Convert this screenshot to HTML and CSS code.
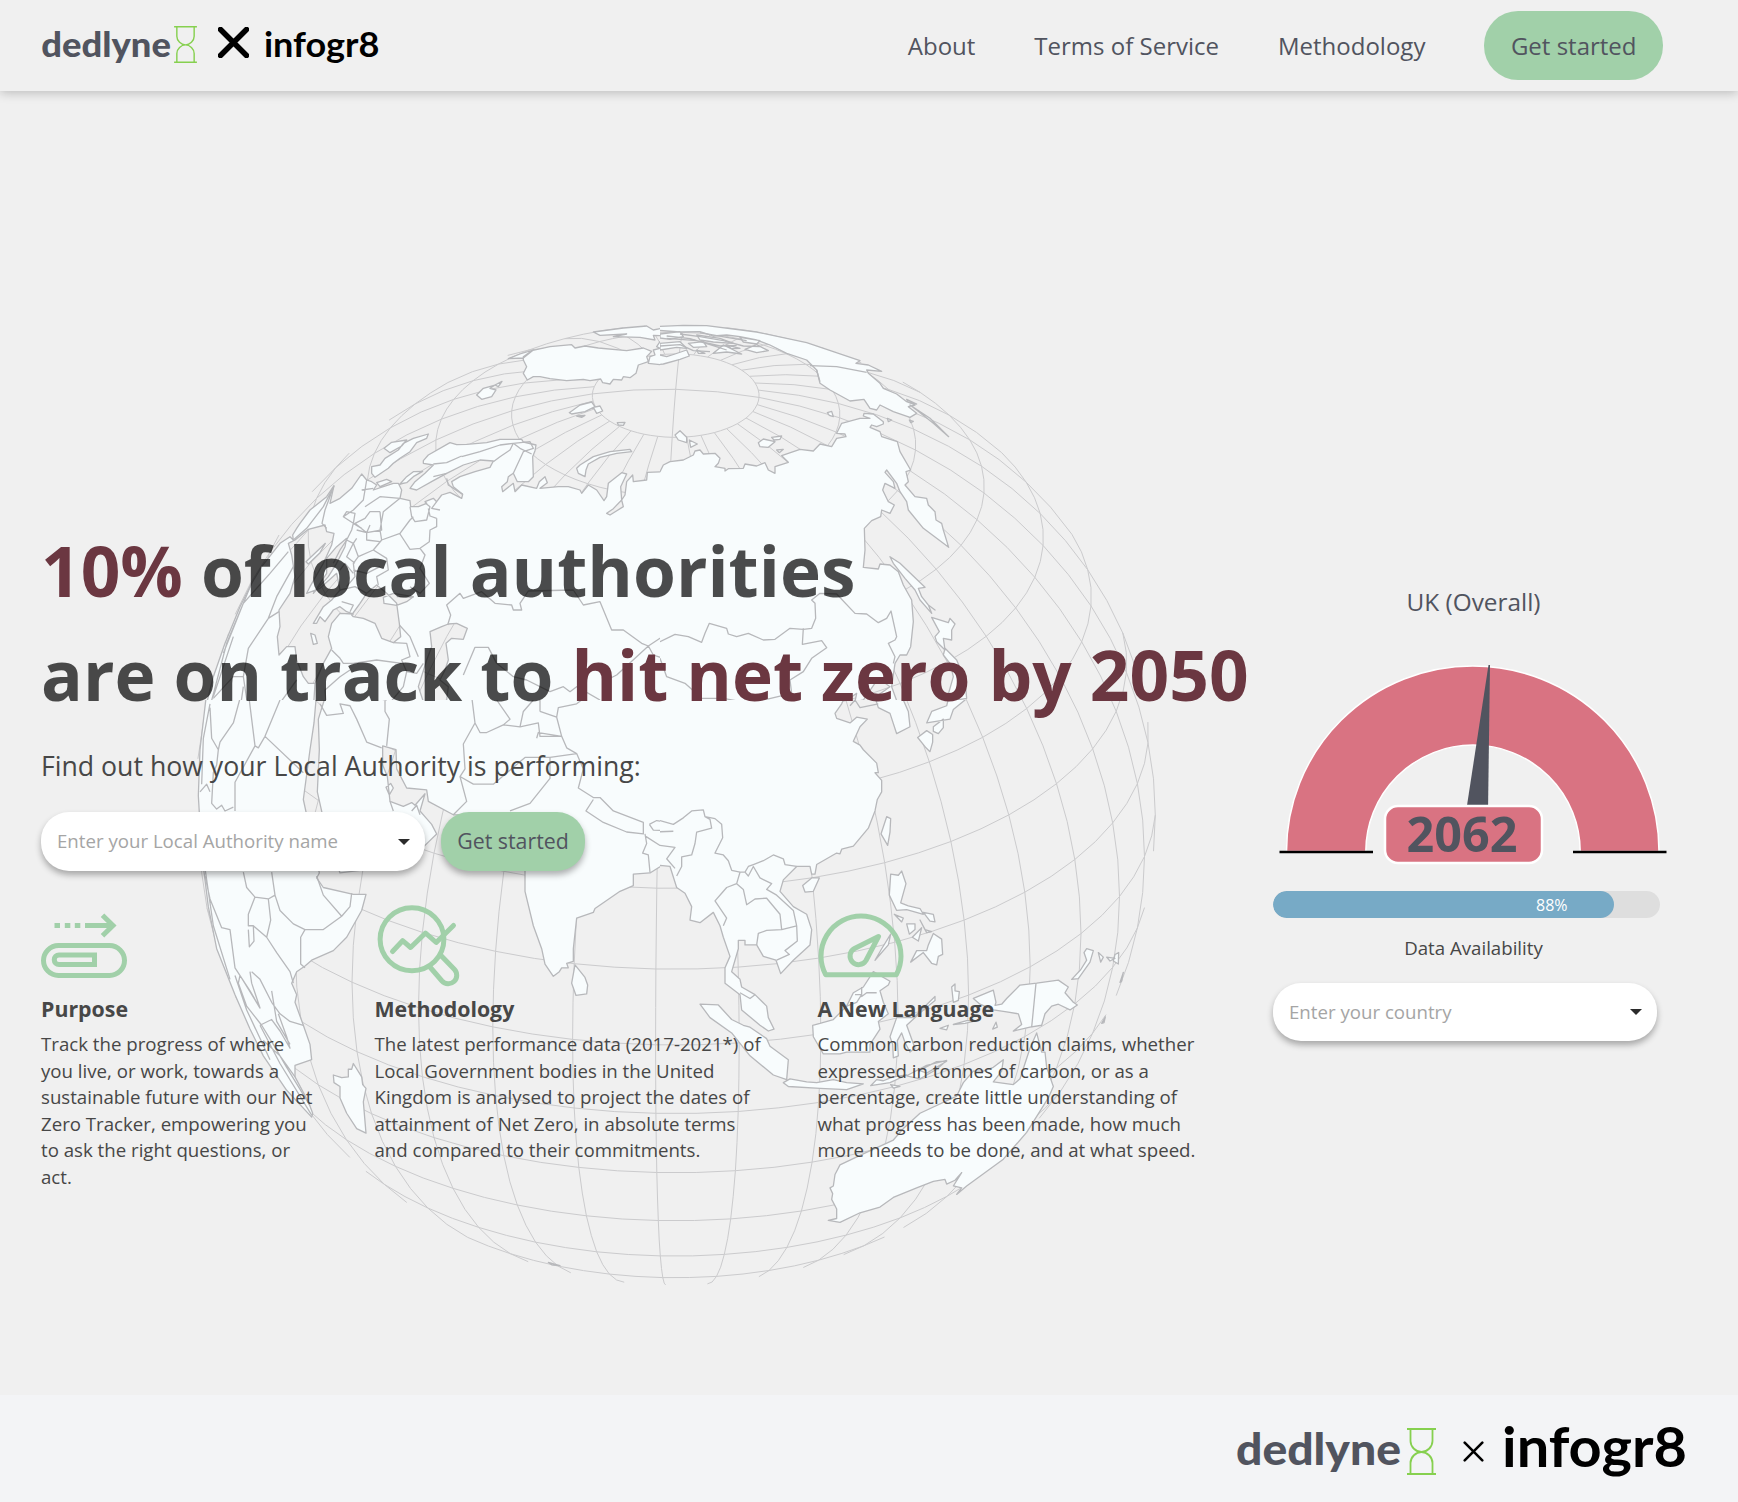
FILE: index.html
```html
<!DOCTYPE html>
<html lang="en">
<head>
<meta charset="utf-8">
<title>Net Zero Tracker</title>
<link rel="stylesheet" href="styles.css">
</head>
<body>
<header class="header">
  <div class="brand">
    <svg class="brand-dedlyne" viewBox="0 0 166 56" width="131" height="44"><text class="word-dedlyne" x="0" y="42" textLength="165" lengthAdjust="spacingAndGlyphs">dedlyne</text></svg>
    <svg class="brand-glass" viewBox="0 0 29 47" width="23" height="37"><path d="M0 1H29M0 46H29M3.500 1V13C3.500 19 9 24 14.500 24S25.500 19 25.500 13V1M3.500 46V35C3.500 29 9 24 14.500 24S25.500 29 25.500 35V46"/></svg>
    <svg class="brand-x" viewBox="0 0 31 31" width="31" height="31"><path d="M2.500 2.500L28.500 28.500M28.500 2.500L2.500 28.500"/></svg>
    <svg class="brand-info" viewBox="0 0 182 64" width="114" height="40"><text class="word-info" x="-2" y="49" textLength="185" lengthAdjust="spacingAndGlyphs">infogr8</text></svg>
  </div>
  <nav class="nav">
    <a>About</a><a>Terms of Service</a><a>Methodology</a><a class="nav-cta">Get started</a>
  </nav>
</header>

<main class="main">
  <svg class="globe" viewBox="180 91 1000 1304" width="1000" height="1304">
    <path id="graticule" class="graticule"/>
    <!-- north-west quadrant: Europe, Greenland, North Africa -->
    <svg class="land" x="180" y="310" width="480" height="390" viewBox="0 0 1440 1170" preserveAspectRatio="none">
      <path d="M340,690L338,675 350,655 360,640 390,600 440,560 462,527 450,580 480,565 515,535 545,492 560,510 575,515 590,525 580,540 640,520 655,520 665,540 660,565 690,572 692,590 715,590 740,580 735,575 760,565 770,575 785,555 810,547 845,565 848,553 820,530 815,515 840,500 885,485 930,472 940,453 900,450 850,465 800,490 760,512 710,540 690,535 705,515 735,490 760,465 730,460 730,452 745,435 810,398 830,404 860,403 920,398 960,388 1025,388 1030,396 1068,405 1065,422 1058,440 1060,500 1045,515 1012,515 1000,490 985,500 982,515 965,530 968,545 1000,520 1005,545 1025,525 1070,535 1078,515 1095,500 1102,518 1080,535 1135,530 1165,530 1200,540 1205,550 1225,525 1250,540 1272,572 1280,560 1285,520 1325,488 1340,492 1322,530 1325,570 1300,596 1280,610 1290,615 1330,590 1325,570 1335,555 1340,515 1358,495 1360,515 1400,510 1402,487 1448,485 1455,470 1500,450 1500,1200 75,1200 100,1100 135,1000 180,890 215,820 245,770 300,700 330,680Z
      M325,700L345,690 385,658 435,645 440,665 462,670 455,705 430,760 390,830 380,850 420,835 470,790 480,840 455,870 430,890 400,940 410,940 420,920 435,935 460,900 480,890 500,905 520,912 480,910 455,940 445,980 455,1015 430,1060 405,1120 385,1120 370,1100 350,1050 345,1010 320,1010 297,1035 292,980 300,950 297,900 330,850 345,800 335,735Z
      M515,915L540,880 560,850 590,825 620,850 650,880 658,940 662,980 640,998 605,985 585,940 550,925 520,920Z
      M610,862L640,850 700,860 680,875 650,886 612,880Z
      M750,965L785,950 805,942 830,940 862,955 850,988 815,985 798,1000 805,1050 795,1080 780,1110 805,1130 800,1170 770,1185 730,1175 715,1130 740,1050 755,1010Z
      M1030,140L1055,122 1110,110 1175,104 1185,114 1215,108 1255,114 1340,122 1390,114 1415,124 1400,140 1405,155 1375,165 1368,190 1350,203 1330,200 1325,210 1300,208 1290,222 1268,218 1262,207 1230,212 1210,208 1160,212 1110,206 1080,200 1060,200 1042,210 1030,190 1040,170 1030,150Z
      M985,146L1020,132 1060,120 1030,144Z
      M1240,66L1330,54 1400,48 1420,60 1500,44 1500,80 1420,76 1425,90 1380,82 1300,80 1340,72 1260,76Z
      M1440,95L1430,110 1440,115 1420,120 1425,135 1410,140 1405,160 1450,165 1500,155 1500,95Z
      M890,255L910,235 945,225 930,235 948,240 935,260 905,268Z M945,225L966,214 955,230Z
      M1168,308L1200,285 1235,276 1245,290 1215,305 1175,312Z M1240,292L1260,288 1268,303 1250,310Z M1312,338L1335,337 1330,346 1315,345Z M1190,318L1215,316 1205,322Z
      M1190,475L1200,465 1240,440 1290,425 1350,418 1355,425 1310,430 1260,442 1225,462 1218,480 1215,500 1195,490Z
      M575,470L600,465 615,445 655,420 670,400 700,385 745,372 740,385 710,398 690,425 660,445 640,460 625,475 585,502 575,490Z
      M612,415L635,397 680,390 665,408 630,428Z M660,522L680,500 700,485 728,484 700,500 680,518Z M590,518L620,508 635,515 600,530Z
      M392,970L405,975 412,1000 400,1003Z M378,755L436,700 420,728 385,762Z M440,745L470,710 500,685 495,710 470,760 445,800 400,850 440,790Z"/>
      <path class="border" d="M462,527L435,600 426,640 440,655 M340,690L380,655 430,590 458,535 M560,510L550,570 520,600 490,620 520,640 515,660 500,690 480,720 460,760 M490,620L500,605 525,610 520,640 545,655 M600,605L570,605 555,625 525,640 560,668 570,645 M600,605L605,660 560,668 530,660 M660,565L610,605 600,660 605,690 660,670 690,630 700,620 M690,590L695,620 705,635 740,630 750,590 735,578 M770,625L750,618 745,595 M770,575L755,595 780,600 M770,625L770,650 750,660 748,695 720,715 690,718 660,672 M720,715L735,735 720,775 748,820 720,850 690,830 M605,690L580,720 535,740 520,700 530,685 M560,668L560,690 600,695 M535,740L520,760 525,800 500,830 M580,720L620,745 625,780 590,800 595,825 M650,860L700,862 M520,780L560,790 600,770 M500,690L520,700 500,740 525,760 M480,780L495,760 520,790 M480,840L525,830 560,850 M485,875L520,885 510,905 M545,540L580,535 M555,590L600,560 660,565 M848,553L805,525 800,505 M800,490L760,500 M845,440L900,425 960,405 1000,400 990,420 960,440 940,455 M1000,400L1020,415 1055,432 M1000,400L1050,395 1060,415 1030,425 1000,490 M760,462L800,458 845,438
      M803,945L812,915 800,885 840,850 850,865 905,845 945,880 995,885 1000,900 1025,900 1020,880 1045,843 1180,840 1210,885 1260,875 1295,960 1330,960 1385,1000 1405,1008 1440,985 1500,975 M1405,1008L1370,1040 1310,1095 1280,1110 M1405,1008L1420,1035 1450,1045 1460,1100 1500,1110 M850,1095L885,1012 925,1012 950,1060 1000,1100 1040,1110 1110,1145 1150,1130 1170,1145 1190,1130 1260,1170 M658,945L690,980 715,1040 M640,998L680,1000 690,1040 665,1050 680,1085 710,1090 730,1060 M455,1020L480,1045 490,1060 520,1060 590,1050 665,1060 M680,1085L670,1130 612,1200 M480,1200L480,1180 520,1190 M405,1120L400,1200 M440,1200L435,1140 480,1100 510,1080
      M297,905L265,925 205,1015 190,1100 205,1200 M190,1100L160,1100 100,1165 M265,925L290,860 340,770 M180,1200L190,1130 M350,1110L285,1200 M160,980L100,1160 M325,725L270,790 190,880 130,1030 M215,820L140,1000 90,1190"/>
    </svg>
    <!-- north-east quadrant: Siberia, Alaska, Japan -->
    <svg class="land" x="660" y="310" width="520" height="390" viewBox="0 0 1560 1170" preserveAspectRatio="none">
      <path d="M-20,490L0,485 10,465 30,455 70,450 100,435 105,423 120,420 130,432 165,430 180,445 175,460 165,470 195,475 195,483 205,476 250,475 255,462 290,468 315,458 325,480 345,490 345,470 385,457 365,437 420,418 460,423 480,402 515,410 530,385 558,380 555,372 530,370 545,340 600,325 630,325 610,318 612,310 640,312 670,335 670,342 650,350 635,345 630,352 660,365 665,380 712,395 720,425 752,480 738,485 745,515 735,525 765,560 800,565 805,585 825,605 828,630 845,640 850,660 866,712 790,655 745,600 740,575 720,545 710,520 680,480 675,487 700,515 705,535 675,520 668,540 685,575 703,585 690,610 665,600 662,620 635,632 613,655 615,720 610,772 655,777 660,762 690,765 715,785 730,825 755,870 760,935 752,1010 740,1035 720,1035 705,1060 695,1130 720,1200 -20,1200Z
      M550,1200L555,1175 590,1150 585,1175 610,1170 655,1105 690,1130 655,1155 660,1200Z
      M690,740L720,760 795,832 775,835 785,860 805,885 825,900 805,885 815,910 780,870 765,840 735,805 700,760Z
      M815,922L865,938 870,925 885,942 875,960 875,990 850,985 855,1020 830,995 825,980 838,965Z
      M855,1015L890,1050 915,1110 920,1165 890,1170 855,1200 820,1200 860,1170 880,1100 870,1060 850,1035Z
      M-20,50L70,46 140,47 290,66 440,98 600,152 588,160 625,165 665,184 620,180 625,190 660,220 670,235 710,252 740,275 765,285 745,290 770,310 750,322 700,305 660,285 650,300 630,295 612,268 570,273 510,240 480,220 470,180 440,150 380,130 330,105 290,90 240,80 200,75 160,78 120,65 60,66 -20,60Z
      M750,285L810,325 866,380 820,340 770,300Z M740,268L770,282 745,276Z
      M0,72L60,65 70,80 30,88 0,84Z M0,100L60,95 80,115 50,112 0,120Z M45,132L80,120 88,138 60,148 10,162 -20,166 -20,130 20,140Z
      M110,75L180,85 220,100 160,96 120,90Z M240,82L300,92 290,102 250,96Z M255,118L290,104 325,122 290,128Z M85,100L130,95 140,110 100,112Z M160,130L190,105 245,132 200,126Z M110,120L135,130 115,130Z M200,105L240,115 215,116Z
      M45,375L60,362 80,382 80,398 55,390Z M88,390L112,402 92,412Z M295,398L310,387 345,395 325,412 300,410Z M335,382L365,378 360,388 342,390Z M350,420L370,418 358,428Z M502,308L515,304 520,320 508,316Z M682,325L695,330 685,335Z M748,330L760,334 752,338Z"/>
      <path class="border" d="M-20,1000L0,995 45,973 85,980 125,997 135,970 148,940 200,955 205,972 230,980 265,970 310,990 345,988 390,955 430,958 455,955 467,925 465,880 455,870 480,850 530,852 585,910 620,912 655,938 680,925 693,903 710,980 705,990 685,1000 705,1040 700,1060 M430,955L427,1003 485,992 500,1013 455,1045 430,1085 390,1110 395,1150 270,1180 190,1165 125,1165 75,1120 20,1100 0,1045 M450,167L530,170 620,187 M470,180L480,215 M20,85L110,92 180,108 230,106 M60,72L120,80 190,92 250,108 300,110 M0,108L60,104 100,122 150,125 M120,68L200,82 260,92 M20,78L90,86 150,104 200,120"/>
    </svg>
    <!-- south-west quadrant: Africa, Arabia, India -->
    <svg class="land" x="180" y="700" width="480" height="600" viewBox="0 0 1440 1568" preserveAspectRatio="none">
      <path d="M80,-20L60,130 55,250 65,400 85,540 110,650 165,770 210,860 250,930 320,1020 395,1090 398,1080 385,1050 345,985 345,955 395,940 390,900 370,850 345,790 350,770 335,740 350,710 375,695 395,680 460,655 500,620 545,550 558,508 520,508 430,490 410,465 418,452 380,300 370,260 390,130 402,60 410,-20Z
      M440,-20L415,50 418,130 412,240 430,310 460,400 480,452 540,445 640,430 735,380 770,350 755,325 740,310 720,290 735,245 705,275 695,268 670,278 630,265 622,200 608,170 608,120 648,130 650,180 680,230 740,235 745,265 820,300 860,300 900,330 960,400 1000,400 1035,440 1035,500 1060,590 1085,650 1095,690 1120,722 1138,710 1145,700 1165,700 1160,688 1180,683 1180,650 1190,570 1240,555 1245,545 1320,500 1360,485 1360,455 1410,452 1450,430 1470,440 1500,490 1500,-20Z
      M618,228L632,218 640,230 628,248Z
      M460,980L485,987 505,985 505,965 515,965 520,950 545,985 548,1005 558,1015 550,1050 558,1132 530,1120 500,1080 480,1040 480,1010 462,1000Z
      M1185,692L1215,725 1223,745 1220,768 1188,772 1175,740Z M1105,1470L1140,1478 1115,1476Z"/>
      <path class="border" d="M75,460L90,520 125,595 150,600 165,700 210,760 240,805 M190,450L200,490 225,515 265,520 285,510 275,450 M225,515L205,560 205,590 220,590 260,620 290,660 330,710 340,740 M220,590L222,630 208,645 205,600 M265,520L272,575 260,620 M285,510L300,550 340,585 375,600 430,600 485,565 430,510 410,460 M375,600L362,620 362,690 375,700 M485,565L510,540 515,505 M215,710L240,730 275,790 300,820 330,840 370,850 M210,710L215,740 240,805 180,720 175,740 200,800 245,850 M240,850L275,835 300,865 330,910 320,880 295,820 M245,850L280,900 320,960 390,1060 M165,720L200,810 270,940 M275,760L290,840 330,900 M240,850L300,950 395,1085 M250,890L300,930 345,985 M65,300L75,440 100,590 150,730
      M90,20L95,100 115,130 120,110 160,60 185,-20 M205,-20L225,120 235,125 255,95 300,0 M255,95L370,190 M225,120L165,215 165,290 M115,130L110,170 100,190 95,270 110,285 125,275 135,290 160,280 M60,240L80,220 90,240 M90,10L70,100 65,220
      M420,10L440,40 490,35 480,10 510,15 530,50 560,110 605,125 M615,-20L615,30 628,50 620,120 M540,-10L620,0 M875,-10L885,60 850,115 855,180 840,200 860,265 820,300 M885,60L900,85 920,85 970,65 1020,70 1075,60 1080,95 1145,95 1160,125 1190,140 1210,180 1195,230 1240,255 1260,255 1300,290 1390,320 1390,350 1340,345 1270,320 1218,290 1240,260 M840,200L880,220 940,220 1035,150 1110,150 1190,140 M1110,150L1110,205 1050,270 990,290 M950,0L990,50 970,65 M1020,70L1030,30 1060,0 M1070,100L1075,85 1145,95 M1080,30L1130,45 1145,95 M1080,-5L1080,30 M1130,45L1135,20 1190,10 1220,-10 M1408,325L1430,315 1475,322 1478,342 1420,340 1408,325 M1395,350L1400,375 1388,400 1405,405 1410,450 M1395,355L1440,380 1480,380 1460,420 1480,440 M630,265L640,290 M695,290L710,275 720,300"/>
    </svg>
    <!-- south-east quadrant: China, South-East Asia, Australia -->
    <svg class="land" x="660" y="700" width="520" height="600" viewBox="0 0 1560 1568" preserveAspectRatio="none">
      <path d="M-20,-20L560,-20 545,10 525,35 530,48 570,60 590,45 622,50 600,70 580,108 600,118 610,130 650,165 655,190 645,190 665,210 665,240 652,260 645,290 625,335 580,382 545,390 540,402 530,400 470,430 465,455 455,455 450,435 410,435 370,470 360,500 400,540 440,560 455,600 450,640 400,680 362,715 348,680 310,670 290,640 255,640 255,628 235,628 235,650 215,710 240,730 245,750 285,770 320,800 325,830 342,860 325,865 300,850 245,810 240,770 195,740 195,700 210,670 190,620 180,590 160,555 120,582 90,575 95,540 75,505 50,490 30,435 0,432 -20,450Z
      M640,-20L655,20 690,35 710,88 750,70 745,30 720,-20Z
      M930,-20L915,0 880,25 870,50 800,60 815,30 860,15 870,-20Z M773,98L800,80 818,90 818,110 810,135 798,125Z M820,70L850,50 850,72 835,88 820,82Z
      M663,350L680,305 692,310 690,345 683,380Z M428,485L455,465 478,465 460,500 435,502Z
      M692,455L715,458 725,447 738,480 722,530 745,538 780,545 790,560 740,548 710,550 688,510Z M703,560L730,570 725,580Z M740,585L765,585 765,600 748,612Z M757,620L785,595 775,630Z M790,555L820,560 825,580 810,578Z M780,575L795,600 815,605 800,608Z
      M752,685L770,655 800,655 805,640 820,610 845,625 848,665 835,670 830,692 815,688 790,660Z M645,680L665,650 692,612 685,640 660,665Z
      M458,850L480,845 520,835 560,800 580,765 610,750 640,710 690,735 685,745 660,760 670,790 685,820 655,840 660,860 630,900 630,920 600,920 560,920 540,925 490,925 460,880Z
      M120,795L175,797 215,835 250,850 270,855 320,885 330,905 385,940 380,992 340,980 270,930 215,870 150,830Z
      M370,1000L390,990 440,998 470,1000 520,992 560,1000 610,1003 560,1018 480,1015 385,1010Z
      M700,935L698,900 690,880 710,830 760,830 825,775 825,785 790,810 740,850 765,910 750,920 735,895 725,870 712,890 715,930Z
      M632,1008L650,992 670,995 700,985 740,980 690,1000Z M692,1005L720,1010 700,1014Z M740,982L800,955 860,942 830,965 780,990Z M778,968L830,945 860,944 800,975Z M840,858L865,850 860,862Z M880,848L920,838 950,838 915,845Z M998,860L1008,842 1012,855Z
      M875,750L885,742 885,760 898,762 895,785 880,790Z
      M940,780L1000,758 1008,790 1005,798 1025,795 1040,780 1080,745 1130,740 1195,732 1225,750 1215,765 1240,790 1252,797 1230,810 1195,795 1175,800 1155,820 1145,850 1110,855 1060,865 1085,848 1075,820 1040,815 1000,810 960,795Z
      M1235,730L1262,705 1280,680 1272,660 1280,650 1300,655 1290,685 1255,728Z M1315,660L1330,672 1322,685Z M1340,672L1365,675 1350,682Z M1365,665L1376,660 1375,690 1360,682Z M1380,738L1390,712 1385,735Z M1325,845L1336,828 1332,843Z
      M505,1360L530,1355 530,1330 515,1305 518,1290 510,1275 520,1270 525,1240 540,1215 600,1190 700,1150 730,1120 780,1080 890,1035 910,1000 940,970 970,970 1000,960 1030,940 1025,970 1000,998 1060,1005 1080,990 1095,950 1110,910 1130,870 1145,920 1155,920 1160,960 1180,1010 1165,1040 1100,1130 1030,1200 920,1270 890,1292 905,1275 880,1270 905,1235 885,1255 860,1265 855,1253 820,1258 770,1275 700,1300 660,1325 600,1340 540,1365Z"/>
      <path class="border" d="M-20,315L0,315 40,325 70,308 95,290 130,287 135,305 150,312 155,335 110,345 105,375 95,405 65,410 65,435 50,460 M135,305L165,310 185,325 188,360 165,400 190,405 205,420 215,445 240,450 255,450 265,435 280,430 310,420 340,405 370,415 375,430 410,435 M255,450L265,460 280,435 300,465 335,480 320,495 350,510 400,550 410,590 365,600 M240,450L230,480 200,490 185,505 165,525 200,570 190,590 M230,480L250,495 260,535 285,520 320,518 360,560 365,600 320,602 295,610 290,640 M410,590L412,630 375,655 388,665 350,680 M240,765L270,780 285,770 M-20,345L40,343 M-20,378L45,385 20,415 45,440 M560,800L590,790 605,770 585,770 M1128,740L1115,855 M605,750L605,775 620,765 650,765 M655,10L600,20 585,0 570,15"/>
    </svg>
  </svg>

  <section class="hero">
    <h1 class="headline"><span class="accent">10%</span> of local authorities<br>are on track to <span class="accent">hit net zero by 2050</span></h1>
    <p class="lead">Find out how your Local Authority is performing:</p>
    <div class="search">
      <div class="select"><span>Enter your Local Authority name</span><i class="caret"></i></div>
      <a class="search-cta">Get started</a>
    </div>
    <div class="features">
      <article class="feature">
        <svg class="feature-icon" width="87" height="90" viewBox="0 0 87 90"><rect x="2.500" y="43.500" width="81" height="30" rx="15"/><path d="M53.500 53H18a4.750 4.750 0 0 0 0 9.500H53.500Z"/><path d="M44 23.500H72M61.500 13.200L72 23.500 61.500 33.800"/><path d="M13.500 23.500H19M23.800 23.500H29.300M33.800 23.500H39.300"/></svg>
        <h2>Purpose</h2>
        <p>Track the progress of where you live, or work, towards a sustainable future with our Net Zero Tracker, empowering you to ask the right questions, or act.</p>
      </article>
      <article class="feature">
        <svg class="feature-icon" width="87" height="90" viewBox="0 0 87 90"><ellipse cx="37" cy="37.300" rx="31.900" ry="31.500"/><path stroke-linecap="round" stroke-linejoin="round" d="M17.500 49.500L27.600 38.700 35.600 45.500 50.500 31 61.200 40.500 78.500 23.500"/><path d="M54.500 64.500L67 79a8.400 8.400 0 0 0 12.500-11.500L65.500 53"/></svg>
        <h2>Methodology</h2>
        <p>The latest performance data (2017-2021*) of Local Government bodies in the United Kingdom is analysed to project the dates of attainment of Net Zero, in absolute terms and compared to their commitments.</p>
      </article>
      <article class="feature">
        <svg class="feature-icon" width="87" height="90" viewBox="0 0 87 90"><path stroke-linejoin="round" d="M7.600 72.700A40 40 0 1 1 78.400 72.700Z"/><path stroke-linejoin="round" d="M60.500 34.500L36.500 46.500a8.600 8.600 0 1 0 11.500 12Z"/></svg>
        <h2>A New Language</h2>
        <p>Common carbon reduction claims, whether expressed in tonnes of carbon, or as a percentage, create little understanding of what progress has been made, how much more needs to be done, and at what speed.</p>
      </article>
    </div>
  </section>

  <aside class="panel">
    <h3>UK (Overall)</h3>
    <svg class="gauge" width="400" height="208" viewBox="1273 660 400 208">
      <path class="arc" d="M1286.500 851.500A186.250 185.500 0 0 1 1659 851.500H1580.200A107.200 106.500 0 0 0 1365.800 851.500Z"/>
      <path class="base" d="M1279.500 852H1373M1573 852H1666.500"/>
      <path class="needle" d="M1488.500 665H1490L1488 812H1466Z"/>
      <rect class="badge" x="1385" y="806" width="157" height="57" rx="13"/>
      <text class="year" x="1462" y="851.800" text-anchor="middle">2062</text>
    </svg>
    <div class="progress"><div class="progress-fill" style="width:88%">88%</div></div>
    <p class="caption">Data Availability</p>
    <div class="select"><span>Enter your country</span><i class="caret"></i></div>
  </aside>
</main>

<footer class="footer">
  <svg class="brand-dedlyne" viewBox="0 0 166 56" width="166" height="56"><text class="word-dedlyne" x="0" y="44" textLength="165" lengthAdjust="spacingAndGlyphs">dedlyne</text></svg>
  <svg class="brand-glass" viewBox="0 0 29 47" width="29" height="47"><path d="M0 1H29M0 46H29M3.500 1V13C3.500 19 9 24 14.500 24S25.500 19 25.500 13V1M3.500 46V35C3.500 29 9 24 14.500 24S25.500 29 25.500 35V46"/></svg>
  <svg class="brand-x" viewBox="0 0 31 31" width="21" height="21"><path d="M2.500 2.500L28.500 28.500M28.500 2.500L2.500 28.500"/></svg>
  <svg class="brand-info" viewBox="0 0 182 64" width="182" height="64"><text class="word-info" x="-2" y="50" textLength="185" lengthAdjust="spacingAndGlyphs">infogr8</text></svg>
</footer>
<script src="globe.js"></script>
</body>
</html>
```
FILE: styles.css
```css
* { box-sizing: border-box; }
body { margin: 0; background: #f0f0f0; font-family: "Open Sans", sans-serif; color: #474747; }
h1, h2, h3, p { margin: 0; }

.header { position: relative; z-index: 2; height: 91px; padding: 0 75px 0 41px; display: flex; justify-content: space-between; align-items: center; background: #f0f0f0; box-shadow: 0 2px 10px rgba(0, 0, 0, .22); }
.brand { display: flex; align-items: center; height: 91px; }
.header .brand-glass { margin: -2px 0 0 2px; }
.header .brand-x { margin: -6px 16px 0 21px; }
.nav { display: flex; align-items: center; gap: 59px; font-size: 24px; color: #51545f; }
.nav-cta { height: 69px; padding: 0 26.500px; border-radius: 34px; display: flex; align-items: center; background: #a1d0a9; }

.word-dedlyne { font: 900 43px Lato, sans-serif; fill: #51545f; }
.word-info { font: 700 56px Lato, sans-serif; fill: #000; }
.brand-dedlyne, .brand-info { overflow: visible; }
.brand-glass path { fill: none; stroke: #86d04f; stroke-width: 1.800; }
.brand-x path { stroke: #000; stroke-width: 5.500; stroke-linecap: round; }
.footer .brand-x path { stroke-width: 3.800; }

.main { position: relative; height: 1304px; display: flex; }
.globe { position: absolute; left: 180px; top: 0; }
.graticule { fill: none; stroke: #cbcbcd; stroke-width: 1; }
.land path { fill: #f8fcfd; fill-rule: evenodd; stroke: #b7b8bb; stroke-width: 1.300; vector-effect: non-scaling-stroke; stroke-linejoin: round; }
.land .border { fill: none; }

.hero { position: relative; flex: none; width: 1273px; padding: 427px 0 0 41px; }
.headline { font-size: 69.400px; line-height: 104px; font-weight: 700; color: rgba(0, 0, 0, .7); white-space: nowrap; }
.accent { color: #6b3741; }
.lead { margin-top: 22px; font-size: 26.670px; line-height: 36px; }
.search { display: flex; gap: 16px; margin-top: 28px; }
.select { width: 384px; height: 58px; padding: 0 15px 2px 16px; border-radius: 28px; background: #fff; display: flex; align-items: center; justify-content: space-between; font-size: 18.660px; color: #a5a5a5; box-shadow: 0 4px 6px rgba(0, 0, 0, .3); }
.search .select { height: 59px; }
.caret { margin-top: 2px; border: 6px solid transparent; border-top-color: #2b2b2b; border-bottom: 0; }
.search-cta { width: 144px; height: 59px; padding-bottom: 2px; border-radius: 28px; background: #a1d0a9; color: #51545f; font-size: 21.330px; display: flex; align-items: center; justify-content: center; box-shadow: 0 4px 6px rgba(0, 0, 0, .3); }
.features { display: grid; grid-template-columns: 333.500px 443px 384px; margin-top: 31px; }
.feature-icon { display: block; fill: none; stroke: #a1d0a9; stroke-width: 5; }
.feature h2 { font-size: 21.330px; line-height: 30px; margin-top: 2px; }
.feature p { font-size: 18.660px; line-height: 26.600px; margin-top: 7px; padding-right: 56px; }
.feature:last-child p { padding-right: 0; }

.panel { position: relative; flex: none; width: 401px; padding-top: 494px; }
.panel h3 { font-size: 24.400px; line-height: 34px; font-weight: 400; color: #51545f; text-align: center; }
.gauge { display: block; margin-top: 41px; }
.arc { fill: #d97382; stroke: #fff; stroke-width: 1.500; }
.base { stroke: #000; stroke-width: 2.500; }
.needle { fill: #51545f; }
.badge { fill: #d97382; stroke: #fff; stroke-width: 2.500; }
.year { font: 700 48.500px "Open Sans", sans-serif; fill: #51545f; }
.progress { width: 387px; height: 27px; margin-top: 23px; border-radius: 14px; background: #dedede; overflow: hidden; }
.progress-fill { height: 27px; border-radius: 14px; background: #77aac6; color: #fff; font-size: 16px; font-weight: 500; line-height: 29px; text-align: right; padding-right: 46px; }
.caption { margin-top: 16px; font-size: 18.660px; line-height: 28px; text-align: center; }
.panel .select { margin-top: 21px; }

.footer { height: 107px; padding-right: 52px; display: flex; align-items: center; justify-content: flex-end; background: #f3f4f6; }
.footer .brand-glass { margin: 6px 0 0 5px; }
.footer .brand-x { margin: 6px 20px 0 27px; }
```
FILE: globe.js
```js
// Orthographic 10-degree graticule, centred on 30N 92.4E.
const RAD = Math.PI / 180;
const view = { cx: 675.7, cy: 805, r: 480, lat: 30 * RAD, lon: 92.4 * RAD };

function project(lon, lat) {
  const l = lon * RAD - view.lon, p = lat * RAD;
  const front = Math.sin(view.lat) * Math.sin(p) + Math.cos(view.lat) * Math.cos(p) * Math.cos(l);
  return {
    front,
    x: view.cx + view.r * Math.cos(p) * Math.sin(l),
    y: view.cy - view.r * (Math.cos(view.lat) * Math.sin(p) - Math.sin(view.lat) * Math.cos(p) * Math.cos(l))
  };
}

function trace(points, horizon) {
  let d = "", pen = false;
  for (const q of points) {
    const visible = q.front > horizon;
    if (visible) d += (pen ? "L" : "M") + q.x.toFixed(1) + " " + q.y.toFixed(1);
    pen = visible;
  }
  return d;
}

let d = "";
for (let lon = -180; lon < 180; lon += 10) {
  const end = lon % 90 === 0 ? 90 : 80, pts = [];
  for (let lat = -end; lat <= end; lat += 5) pts.push(project(lon, lat));
  d += trace(pts, -0.02);
}
for (let lat = -80; lat <= 80; lat += 10) {
  const pts = [];
  for (let lon = -180; lon <= 180; lon += 5) pts.push(project(lon, lat));
  d += trace(pts, 0.004);
}
document.getElementById("graticule").setAttribute("d", d);
```
